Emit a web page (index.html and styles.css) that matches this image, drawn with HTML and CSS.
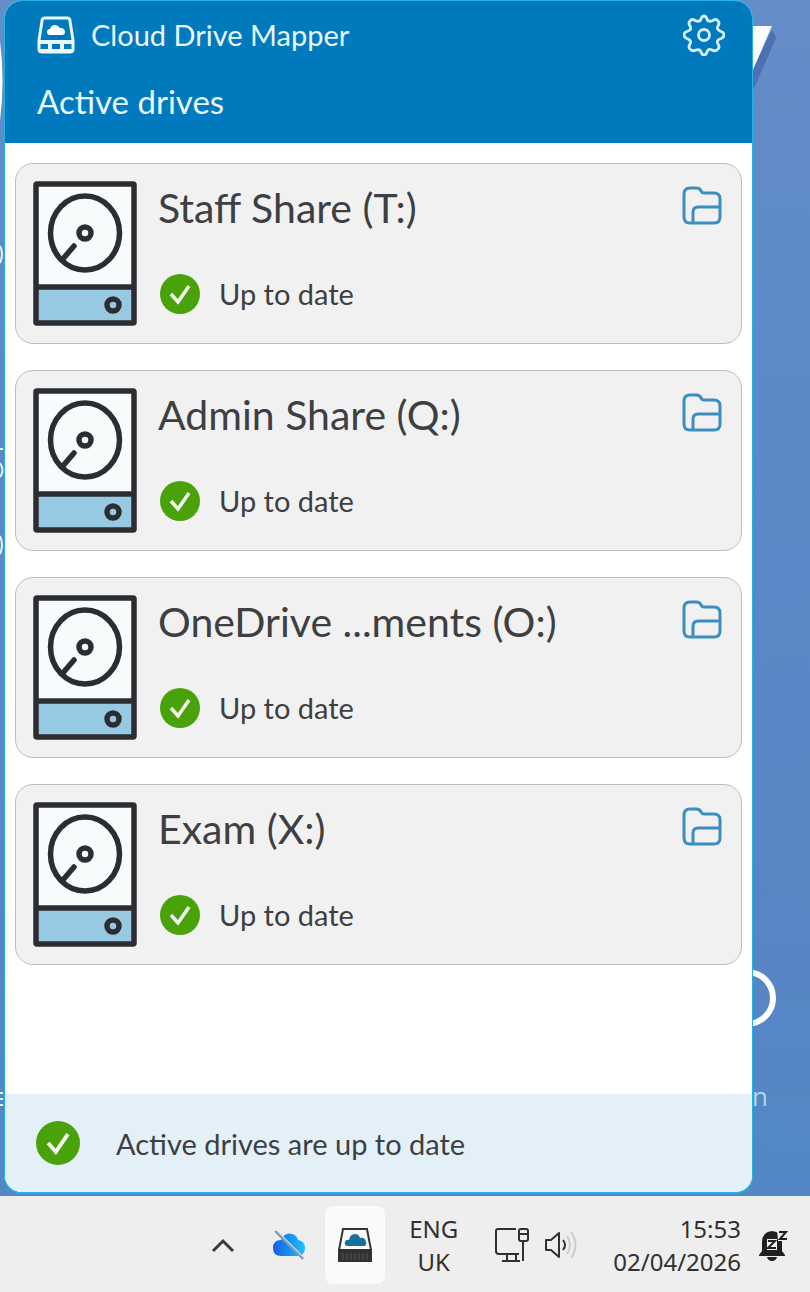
FILE: index.html
```html
<!DOCTYPE html>
<html lang="en">
<head>
<meta charset="utf-8">
<title>Cloud Drive Mapper</title>
<link rel="stylesheet" href="styles.css">
</head>
<body>
<svg class="sprites" aria-hidden="true">
  <symbol id="drive" viewBox="0 0 104 145">
    <rect x="3" y="3" width="98" height="139" rx="1" fill="#f8fbfc"/>
    <path d="M3 106h98v36H3z" fill="#98c9e3"/>
    <g fill="none" stroke="#2b2d31" stroke-width="5.500">
      <rect x="3" y="3" width="98" height="139" rx="1"/>
      <path d="M3 106h98"/>
      <ellipse cx="52" cy="52" rx="34.500" ry="37"/>
      <circle cx="52" cy="52" r="6"/>
      <path d="M41 65 29 79" stroke-linecap="round"/>
      <circle cx="80" cy="124" r="6"/>
    </g>
  </symbol>
  <symbol id="check" viewBox="0 0 40 40">
    <circle cx="20" cy="20" r="20" fill="#4aa20a"/>
    <path d="m11 20 7 8 11-16" fill="none" stroke="#f4faf0" stroke-width="3.500"/>
  </symbol>
  <symbol id="folder" viewBox="0 0 40 40">
    <g fill="none" stroke="#3c8dc0" stroke-width="3" stroke-linejoin="round">
      <path d="M8 38h24q6 0 6-6V14q0-6-6-6H22q-2 0-3-2-1-3-5-3H8Q2 3 2 9v23q0 6 6 6z"/>
      <path d="M11 37V27q0-5 5-5h22"/>
    </g>
  </symbol>
</svg>

<div class="desktop">
  <svg class="art art-stroke" viewBox="0 0 30 80" aria-hidden="true"><path d="M20 10 24 18 3 66 0 70V50z" fill="#3c5fa4" opacity=".6"/><path d="M0 6h20L0 52z" fill="#fff"/></svg>
  <svg class="art art-ring" viewBox="0 0 30 60" aria-hidden="true"><circle cx="-5" cy="30" r="26" fill="none" stroke="#fff" stroke-width="6"/></svg>
  <span class="art art-letter">n</span>
  <svg class="art art-left" viewBox="0 0 5 1120" aria-hidden="true"><g fill="none" stroke="#e8f1fb" stroke-width="3"><path d="M0 41q5 39 0 80" fill="#fff" stroke="none"/><path d="M0 246q4 8 0 17M0 449h3M0 463q5 8 0 14M0 536q4 9 0 18" stroke-width="2"/><path d="M0 1093h3M0 1099h3M0 1105h3" stroke-width="2"/></g></svg>

  <main class="panel">
    <header class="panel-head">
      <div class="brand">
        <svg class="brand-icon" viewBox="0 0 38 38" aria-hidden="true"><path d="M8 2h22q3 0 3 3l3 19v9q0 3-3 3H5q-3 0-3-3v-9L5 5q0-3 3-3z" fill="none" stroke="#e9f7ff" stroke-width="3"/><path d="M2 24h34v4H2zM2 33h34v3H2zM11 26h4v9h-4zM23 26h4v9h-4z" fill="#e9f7ff"/><path d="M13 19q-3 0-3-3t3-3q1-4 5-4 3 0 5 3 5 0 5 4 0 3-3 3z" fill="#fff"/></svg>
        <h1 class="brand-name">Cloud Drive Mapper</h1>
        <button class="icon-button settings" type="button" aria-label="Settings">
          <svg viewBox="0 0 42 42" aria-hidden="true"><g fill="none" stroke="#d8efff" stroke-width="2.800" stroke-linejoin="round"><path d="M21 2q2 0 3 3t5 2q4-3 6 0 2 2 0 5t2 5q4 1 4 4t-4 4-2 5q2 3 0 5-2 3-6 1t-5 2q-1 3-3 3t-3-3-5-2q-4 2-6-1-2-2 0-5t-2-5q-4-1-4-4t4-4 2-5q-2-3 0-5 2-3 6 0 4 1 5-2t3-3z"/><circle cx="21" cy="21" r="5.500"/></g></svg>
        </button>
      </div>
      <h2 class="section-name">Active drives</h2>
    </header>

    <ul class="drives">
      <li class="card">
        <svg class="drive-icon" aria-hidden="true"><use href="#drive"/></svg>
        <div class="card-body"><h3 class="drive-name">Staff Share (T:)</h3><p class="status"><svg class="check" aria-hidden="true"><use href="#check"/></svg>Up to date</p></div>
        <button class="icon-button open" type="button" aria-label="Open Staff Share"><svg aria-hidden="true"><use href="#folder"/></svg></button>
      </li>
      <li class="card">
        <svg class="drive-icon" aria-hidden="true"><use href="#drive"/></svg>
        <div class="card-body"><h3 class="drive-name">Admin Share (Q:)</h3><p class="status"><svg class="check" aria-hidden="true"><use href="#check"/></svg>Up to date</p></div>
        <button class="icon-button open" type="button" aria-label="Open Admin Share"><svg aria-hidden="true"><use href="#folder"/></svg></button>
      </li>
      <li class="card">
        <svg class="drive-icon" aria-hidden="true"><use href="#drive"/></svg>
        <div class="card-body"><h3 class="drive-name">OneDrive ...ments (O:)</h3><p class="status"><svg class="check" aria-hidden="true"><use href="#check"/></svg>Up to date</p></div>
        <button class="icon-button open" type="button" aria-label="Open OneDrive"><svg aria-hidden="true"><use href="#folder"/></svg></button>
      </li>
      <li class="card">
        <svg class="drive-icon" aria-hidden="true"><use href="#drive"/></svg>
        <div class="card-body"><h3 class="drive-name">Exam (X:)</h3><p class="status"><svg class="check" aria-hidden="true"><use href="#check"/></svg>Up to date</p></div>
        <button class="icon-button open" type="button" aria-label="Open Exam"><svg aria-hidden="true"><use href="#folder"/></svg></button>
      </li>
    </ul>

    <footer class="summary"><svg class="check-large" viewBox="0 0 40 40" aria-hidden="true"><use href="#check"/></svg><span>Active drives are up to date</span></footer>
  </main>
</div>

<div class="taskbar">
  <button class="icon-button chevron" type="button" aria-label="Show hidden icons"><svg viewBox="0 0 24 16" aria-hidden="true"><path d="m2 14 10-10 10 10" fill="none" stroke="#3a3a3a" stroke-width="3"/></svg></button>
  <button class="icon-button cloud" type="button" aria-label="OneDrive">
    <svg viewBox="0 0 34 32" aria-hidden="true"><defs><linearGradient id="sky"><stop offset="0" stop-color="#1b5fe0"/><stop offset=".5" stop-color="#1590f2"/><stop offset="1" stop-color="#21c1fa"/></linearGradient></defs><path d="M9 27q-8 0-8-8t8-8q4-8 11-6 5 1 6 6 7 1 7 8t-7 8z" fill="url(#sky)"/><path d="m4 2 28 28" stroke="#c8dcf0" stroke-width="3"/><path d="m3 2 28 28" stroke="#8795aa" stroke-width="2"/></svg>
  </button>
  <button class="icon-button app" type="button" aria-label="Cloud Drive Mapper">
    <svg viewBox="0 0 34 34" aria-hidden="true"><path d="M5 1h24l4 21H1z" fill="#fafafa" stroke="#333" stroke-width="2"/><path d="M0 21h34v13H0z" fill="#303133"/><path d="M5 25v7M9 25v7M13 25v7M17 25v7M21 25v7M25 25v7M29 25v7" stroke="#555" stroke-width="1"/><path d="M9 18q-3-1-2-4t4-2q1-6 6-6 4 0 5 4 5-1 6 4 1 2-1 4z" fill="#13719b"/></svg>
  </button>
  <button class="tray-text language" type="button">ENG<br>UK</button>
  <button class="icon-button network" type="button" aria-label="Network">
    <svg viewBox="0 0 36 36" aria-hidden="true"><g fill="none" stroke="#303030" stroke-width="2"><path d="M22 2H4Q2 2 2 4v20q0 3 3 3h20M13 27v6M22 27v6M8 34h18"/><rect x="25" y="2" width="9" height="12" rx="2"/><path d="M25 7h9M29 14v20"/></g></svg>
  </button>
  <button class="icon-button volume" type="button" aria-label="Volume">
    <svg viewBox="0 0 34 28" aria-hidden="true"><g fill="none" stroke="#303030" stroke-width="2" stroke-linejoin="round"><path d="M2 9h5l8-7v24l-8-7H2z"/><path d="M19 9q4 5 0 10"/><path d="M23 5q6 9 0 18M27 1q9 13 0 26" stroke="#cdcdcd"/></g></svg>
  </button>
  <button class="tray-text clock" type="button">15:53<br>02/04/2026</button>
  <button class="icon-button bell" type="button" aria-label="Notifications, do not disturb">
    <svg viewBox="0 0 30 32" aria-hidden="true"><path d="M4 22V13Q4 3 14 2q10 1 10 11v9l3 4v1H1v-1zM9 28h10q-1 4-5 4t-5-4z" fill="#202020"/><path d="M9 10h10v11H9zM19 0h10v12h-9z" fill="#eee"/><path d="M10 12h7l-7 7h8M21 3h7l-6 7h7" fill="none" stroke="#202020" stroke-width="2"/></svg>
  </button>
</div>
</body>
</html>
```
FILE: styles.css
```css
* { box-sizing: border-box; }

body {
  margin: 0;
  min-height: 100vh;
  display: flex;
  flex-direction: column;
  font-family: Lato, "Liberation Sans", sans-serif;
  color: #3d3f42;
}

h1, h2, h3, p, ul { margin: 0; padding: 0; font-weight: 400; }
button { font: inherit; color: inherit; border: 0; padding: 0; background: none; }
svg { display: block; }
.sprites { position: absolute; width: 0; height: 0; }

.desktop {
  position: relative;
  flex: 1;
  display: flex;
  padding: 0 57px 2px 4px;
  overflow: hidden;
  background: linear-gradient(#648dc9, #5b89c8 35%, #5985c5 75%, #5388c5);
}

.art { position: absolute; }
.art-stroke { left: 752px; top: 20px; width: 30px; height: 80px; }
.art-ring { left: 752px; top: 968px; width: 30px; height: 60px; }
.art-letter { left: 752px; top: 1080px; font: 26px/32px "Open Sans", sans-serif; color: #b3d5f4; }
.art-left { left: 0; top: 0; width: 5px; height: 1120px; }

.panel {
  position: relative;
  flex: 1;
  display: flex;
  flex-direction: column;
  overflow: hidden;
  border: 1px solid #22b3e2;
  border-bottom-width: 2px;
  border-radius: 18px;
  background: #fff;
}

.panel-head { padding: 11px 27px 22px 32px; background: #007abc; color: #e9f7ff; }
.brand { display: flex; align-items: center; height: 46px; }
.brand-icon { width: 38px; height: 38px; }
.brand-name { margin-left: 16px; font-size: 29px; line-height: 40px; }
.settings { margin-left: auto; }
.settings svg { width: 42px; height: 42px; }
.section-name { margin-top: 23px; font-size: 33px; line-height: 40px; }

.drives {
  display: flex;
  flex-direction: column;
  gap: 26px;
  padding: 20px 10px;
  list-style: none;
}

.card {
  display: flex;
  align-items: flex-start;
  padding: 17px;
  border: 1px solid #bdbdbf;
  border-radius: 18px;
  background: #f1f1f1;
}
.drive-icon { width: 104px; height: 145px; }
.card-body { flex: 1; margin-left: 21px; }
.drive-name { font-size: 41px; line-height: 54px; }
.status { display: flex; align-items: center; gap: 19px; margin-top: 39px; padding-left: 2px; font-size: 29px; line-height: 40px; }
.check { width: 40px; height: 40px; }
.open { margin: 4px 2px 0 0; }
.open svg { width: 40px; height: 40px; }

.summary {
  display: flex;
  align-items: center;
  gap: 36px;
  height: 98px;
  margin-top: auto;
  padding: 0 31px;
  background: #e4f0f8;
  font-size: 29px;
}
.check-large { width: 44px; height: 44px; }

.taskbar {
  display: flex;
  align-items: center;
  justify-content: flex-end;
  height: 96px;
  padding: 2px 22px 0 0;
  background: #eee;
  color: #303030;
}
.chevron svg { width: 24px; height: 16px; }
.cloud { margin-left: 37px; }
.cloud svg { width: 34px; height: 32px; }
.app { margin-left: 19px; padding: 22px 13px; border-radius: 8px; background: #fafafa; }
.app svg { width: 34px; height: 34px; }
.tray-text { font-family: "Noto Sans", sans-serif; font-size: 24px; line-height: 33px; }
.language { margin-left: 24px; }
.network { margin-left: 36px; }
.network svg { width: 36px; height: 36px; }
.volume { margin-left: 14px; }
.volume svg { width: 34px; height: 28px; }
.clock { margin-left: 35px; text-align: right; }
.bell { margin-left: 17px; }
.bell svg { width: 30px; height: 32px; }
```
